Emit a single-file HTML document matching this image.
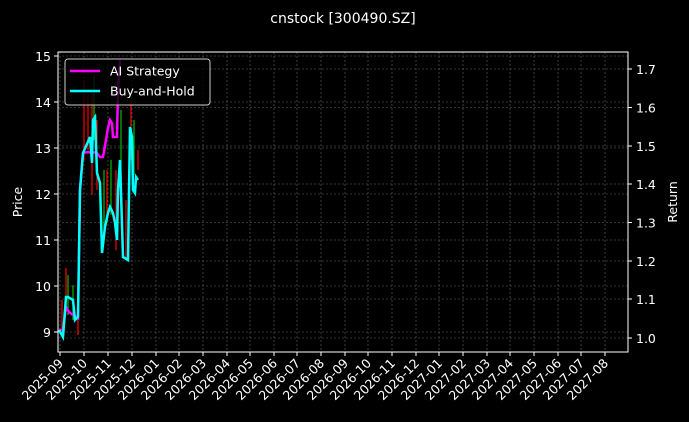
<!DOCTYPE html>
<html><head><meta charset="utf-8"><style>
html,body{margin:0;padding:0;background:#000;}
svg{display:block;font-family:"DejaVu Sans","Liberation Sans",sans-serif;}
</style></head><body>
<svg width="689" height="422" viewBox="0 0 689 422" xmlns="http://www.w3.org/2000/svg">
<rect width="689" height="422" fill="#000"/>
<text x="343" y="23" fill="#fff" font-size="14" text-anchor="middle">cnstock [300490.SZ]</text>
<g stroke="#666" stroke-width="0.6" stroke-dasharray="2,2">
<line x1="58" x2="628" y1="56" y2="56"/><line x1="58" x2="628" y1="102" y2="102"/><line x1="58" x2="628" y1="148" y2="148"/><line x1="58" x2="628" y1="194" y2="194"/><line x1="58" x2="628" y1="240" y2="240"/><line x1="58" x2="628" y1="286" y2="286"/><line x1="58" x2="628" y1="332" y2="332"/>
<line x1="58" x2="628" y1="69" y2="69"/><line x1="58" x2="628" y1="107.5" y2="107.5"/><line x1="58" x2="628" y1="146" y2="146"/><line x1="58" x2="628" y1="184" y2="184"/><line x1="58" x2="628" y1="222.5" y2="222.5"/><line x1="58" x2="628" y1="261" y2="261"/><line x1="58" x2="628" y1="299" y2="299"/><line x1="58" x2="628" y1="338" y2="338"/>
<line y1="52" y2="352" x1="60" x2="60"/><line y1="52" y2="352" x1="84" x2="84"/><line y1="52" y2="352" x1="108" x2="108"/><line y1="52" y2="352" x1="132" x2="132"/><line y1="52" y2="352" x1="156" x2="156"/><line y1="52" y2="352" x1="179" x2="179"/><line y1="52" y2="352" x1="203" x2="203"/><line y1="52" y2="352" x1="227" x2="227"/><line y1="52" y2="352" x1="250" x2="250"/><line y1="52" y2="352" x1="274" x2="274"/><line y1="52" y2="352" x1="297" x2="297"/><line y1="52" y2="352" x1="321" x2="321"/><line y1="52" y2="352" x1="345" x2="345"/><line y1="52" y2="352" x1="368" x2="368"/><line y1="52" y2="352" x1="392" x2="392"/><line y1="52" y2="352" x1="416" x2="416"/><line y1="52" y2="352" x1="439" x2="439"/><line y1="52" y2="352" x1="463" x2="463"/><line y1="52" y2="352" x1="487" x2="487"/><line y1="52" y2="352" x1="510" x2="510"/><line y1="52" y2="352" x1="534" x2="534"/><line y1="52" y2="352" x1="558" x2="558"/><line y1="52" y2="352" x1="581" x2="581"/><line y1="52" y2="352" x1="605" x2="605"/>
</g>
<g stroke-width="1.2">
<line x1="62" x2="62" y1="300" y2="335" stroke="#f00"/><line x1="66" x2="66" y1="268" y2="300" stroke="#f00"/><line x1="68" x2="68" y1="275" y2="315" stroke="#0b0"/><line x1="73" x2="73" y1="285" y2="320" stroke="#0b0"/><line x1="78" x2="78" y1="300" y2="335" stroke="#f00"/>
<line x1="84" x2="84" y1="80" y2="160" stroke="#f00"/><line x1="88" x2="88" y1="95" y2="150" stroke="#f00"/><line x1="92" x2="92" y1="90" y2="195" stroke="#f00"/><line x1="94" x2="94" y1="75" y2="140" stroke="#0b0"/><line x1="97" x2="97" y1="120" y2="190" stroke="#f00"/><line x1="104" x2="104" y1="170" y2="240" stroke="#0b0"/><line x1="107" x2="107" y1="170" y2="220" stroke="#f00"/><line x1="111" x2="111" y1="160" y2="215" stroke="#0b0"/><line x1="116" x2="116" y1="170" y2="250" stroke="#f00"/><line x1="121" x2="121" y1="110" y2="180" stroke="#0b0"/><line x1="126" x2="126" y1="200" y2="260" stroke="#f00"/><line x1="131" x2="131" y1="100" y2="160" stroke="#f00"/><line x1="134" x2="134" y1="120" y2="175" stroke="#0b0"/><line x1="138" x2="138" y1="150" y2="170" stroke="#f00"/>
</g>
<polyline fill="none" stroke="#f0f" stroke-width="2.5" points="59,330 63,330 66,307 69,312 73,315 78,318 80,190 83,153 88,152 92,153 96,152 100,157 103,157 106,140 108,128 110,120 112,123 113,137 117,137 118,90 120,60"/>
<polyline fill="none" stroke="#0ff" stroke-width="2.5" points="59,330 63,337 66,297 68,297 73,300 75,320 78,317 80,190 83,153 90,137 92,163 93,120 95,117 97,173 100,183 102,253 105,227 108,213 110,207 113,213 115,223 117,240 118,190 120,160 123,257 128,260 130,127 132,137 133,190 135,193 136,177 138,180"/>
<rect x="58" y="52" width="570" height="300" fill="none" stroke="#fff" stroke-width="1"/>
<rect x="65" y="59" width="145" height="46" rx="3" fill="#000" fill-opacity="0.8" stroke="#ccc" stroke-width="1"/>
<line x1="70" x2="100" y1="71" y2="71" stroke="#f0f" stroke-width="2.5"/>
<line x1="70" x2="100" y1="91" y2="91" stroke="#0ff" stroke-width="2.5"/>
<g fill="#fff" font-size="12.5">
<text x="110" y="75.5">AI Strategy</text>
<text x="110" y="95.5">Buy-and-Hold</text>
</g>
<g stroke="#fff" stroke-width="1">
<line x1="54" x2="58" y1="56" y2="56"/><line x1="54" x2="58" y1="102" y2="102"/><line x1="54" x2="58" y1="148" y2="148"/><line x1="54" x2="58" y1="194" y2="194"/><line x1="54" x2="58" y1="240" y2="240"/><line x1="54" x2="58" y1="286" y2="286"/><line x1="54" x2="58" y1="332" y2="332"/>
<line x1="628" x2="632" y1="69" y2="69"/><line x1="628" x2="632" y1="107.5" y2="107.5"/><line x1="628" x2="632" y1="146" y2="146"/><line x1="628" x2="632" y1="184" y2="184"/><line x1="628" x2="632" y1="222.5" y2="222.5"/><line x1="628" x2="632" y1="261" y2="261"/><line x1="628" x2="632" y1="299" y2="299"/><line x1="628" x2="632" y1="338" y2="338"/>
</g>
<g fill="#fff" font-size="12.5" text-anchor="end">
<text x="51" y="61">15</text><text x="51" y="107">14</text><text x="51" y="153">13</text><text x="51" y="199">12</text><text x="51" y="245">11</text><text x="51" y="291">10</text><text x="51" y="337">9</text>
</g>
<g fill="#fff" font-size="12.5">
<text x="636" y="74">1.7</text><text x="636" y="112.5">1.6</text><text x="636" y="151">1.5</text><text x="636" y="189">1.4</text><text x="636" y="227.5">1.3</text><text x="636" y="266">1.2</text><text x="636" y="304">1.1</text><text x="636" y="343">1.0</text>
</g>
<text transform="translate(22,202) rotate(-90)" fill="#fff" font-size="12.5" text-anchor="middle">Price</text>
<text transform="translate(677,202) rotate(-90)" fill="#fff" font-size="12.5" text-anchor="middle">Return</text>
<g stroke="#fff" stroke-width="1">
<line y1="352" y2="356" x1="60" x2="60"/><line y1="352" y2="356" x1="84" x2="84"/><line y1="352" y2="356" x1="108" x2="108"/><line y1="352" y2="356" x1="132" x2="132"/><line y1="352" y2="356" x1="156" x2="156"/><line y1="352" y2="356" x1="179" x2="179"/><line y1="352" y2="356" x1="203" x2="203"/><line y1="352" y2="356" x1="227" x2="227"/><line y1="352" y2="356" x1="250" x2="250"/><line y1="352" y2="356" x1="274" x2="274"/><line y1="352" y2="356" x1="297" x2="297"/><line y1="352" y2="356" x1="321" x2="321"/><line y1="352" y2="356" x1="345" x2="345"/><line y1="352" y2="356" x1="368" x2="368"/><line y1="352" y2="356" x1="392" x2="392"/><line y1="352" y2="356" x1="416" x2="416"/><line y1="352" y2="356" x1="439" x2="439"/><line y1="352" y2="356" x1="463" x2="463"/><line y1="352" y2="356" x1="487" x2="487"/><line y1="352" y2="356" x1="510" x2="510"/><line y1="352" y2="356" x1="534" x2="534"/><line y1="352" y2="356" x1="558" x2="558"/><line y1="352" y2="356" x1="581" x2="581"/><line y1="352" y2="356" x1="605" x2="605"/>
</g>
<g fill="#fff" font-size="12.5" text-anchor="end">
<text transform="translate(64,364) rotate(-45)">2025-09</text>
<text transform="translate(88,364) rotate(-45)">2025-10</text>
<text transform="translate(112,364) rotate(-45)">2025-11</text>
<text transform="translate(136,364) rotate(-45)">2025-12</text>
<text transform="translate(160,364) rotate(-45)">2026-01</text>
<text transform="translate(183,364) rotate(-45)">2026-02</text>
<text transform="translate(207,364) rotate(-45)">2026-03</text>
<text transform="translate(231,364) rotate(-45)">2026-04</text>
<text transform="translate(254,364) rotate(-45)">2026-05</text>
<text transform="translate(278,364) rotate(-45)">2026-06</text>
<text transform="translate(301,364) rotate(-45)">2026-07</text>
<text transform="translate(325,364) rotate(-45)">2026-08</text>
<text transform="translate(349,364) rotate(-45)">2026-09</text>
<text transform="translate(372,364) rotate(-45)">2026-10</text>
<text transform="translate(396,364) rotate(-45)">2026-11</text>
<text transform="translate(420,364) rotate(-45)">2026-12</text>
<text transform="translate(443,364) rotate(-45)">2027-01</text>
<text transform="translate(467,364) rotate(-45)">2027-02</text>
<text transform="translate(491,364) rotate(-45)">2027-03</text>
<text transform="translate(514,364) rotate(-45)">2027-04</text>
<text transform="translate(538,364) rotate(-45)">2027-05</text>
<text transform="translate(562,364) rotate(-45)">2027-06</text>
<text transform="translate(585,364) rotate(-45)">2027-07</text>
<text transform="translate(609,364) rotate(-45)">2027-08</text>
</g>
</svg>
</body></html>
